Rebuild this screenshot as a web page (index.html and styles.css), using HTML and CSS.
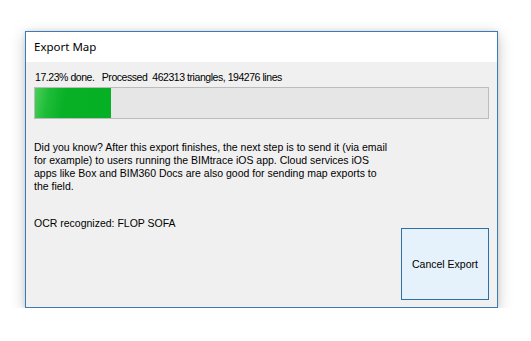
FILE: index.html
```html
<!DOCTYPE html>
<html>
<head>
<meta charset="utf-8">
<link rel="stylesheet" href="styles.css">
</head>
<body>
<div class="window">
  <div class="titlebar">Export Map</div>
  <div class="content">
    <div class="status">17.23% done.&nbsp;&nbsp; Processed&nbsp; 462313 triangles, 194276 lines</div>
    <div class="progress"><div class="fill" style="width:16.8%"></div></div>
    <p class="tip">Did you know? After this export finishes, the next step is to send it (via email<br>for example) to users running the BIMtrace iOS app. Cloud services iOS<br>apps like Box and BIM360 Docs are also good for sending map exports to<br>the field.</p>
    <div class="footer">
      <div class="ocr">OCR recognized: FLOP SOFA</div>
      <button class="cancel">Cancel Export</button>
    </div>
  </div>
</div>
</body>
</html>
```

FILE: styles.css
```css
html, body {
  margin: 0;
  padding: 0;
  background: #ffffff;
}
body {
  padding: 31px 0 0 25px;
  font-family: "Liberation Sans", Arial, sans-serif;
  color: #000;
}
.window {
  width: 471px;
  height: 275px;
  border: 1px solid #3b7cb8;
  background: #f0f0f0;
  display: flex;
  flex-direction: column;
  box-shadow: 0 4px 14px rgba(0,0,0,0.22), 0 0 4px rgba(0,0,0,0.1);
}
.titlebar {
  height: 30px;
  background: #ffffff;
  font-family: "Noto Sans", "Open Sans", sans-serif;
  font-size: 11.5px;
  line-height: 30px;
  padding-left: 8px;
  color: #000;
}
.content {
  flex: 1;
  display: flex;
  flex-direction: column;
  padding: 9px 8px 7px 8px;
  font-size: 10.5px;
  line-height: 13px;
}
.status {
  padding-left: 1px;
  letter-spacing: -0.45px;
}
.progress {
  margin-top: 3px;
  height: 30px;
  border: 1px solid #bcbcbc;
  background: #e6e6e6;
}
.fill {
  height: 100%;
  background: linear-gradient(100deg, #4ccf5a 0%, #1ebc38 18%, #07b025 40%, #06b025 100%);
}
.tip {
  margin: 22px 0 0 0;
}
.footer {
  margin-top: 24px;
  flex: 1;
  display: flex;
  justify-content: space-between;
  align-items: flex-start;
}
.cancel {
  margin-top: 11px;
  width: 88px;
  height: 72px;
  border: 1px solid #2e6fa5;
  background: #e5f1fb;
  font-family: "Liberation Sans", Arial, sans-serif;
  font-size: 10.5px;
  color: #000;
  padding: 0;
}
```
